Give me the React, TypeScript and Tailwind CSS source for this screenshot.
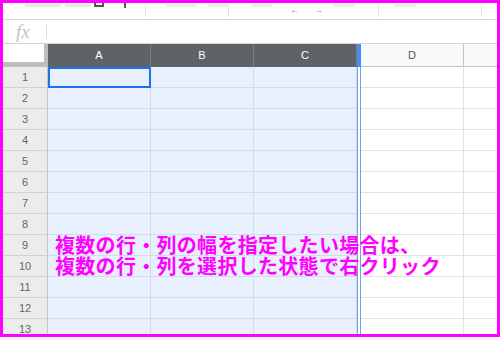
import React from 'react';

const ROWS = Array.from({ length: 13 }, (_, i) => i + 1);
const COLS = 'grid grid-cols-[45px_103px_103px_103px_4px_103px_33px]';

// faint toolbar leftovers, only the lower edge of the icons is visible
const Toolbar: React.FC = () => (
  <div className="flex h-[17px] items-start border-b border-[#d9d9d9] bg-white pl-[22px]">
    <div className="mt-px h-[3px] w-[36px] bg-[#e8e8e8]" />
    <div className="ml-[4px] mt-px h-[3px] w-[26px] bg-[#e8e8e8]" />
    <div className="ml-[3px] h-[4px] w-[10px] border-x-2 border-b-2 border-[#555]" />
    <div className="ml-[20px] h-[5px] w-[2px] bg-[#555]" />
    <div className="ml-[19px] mt-[2px] h-[12px] w-px bg-[#e4e4e4]" />
    <div className="ml-[20px] mt-px h-[3px] w-[30px] bg-[#ececec]" />
    <div className="ml-[12px] mt-px h-[3px] w-[20px] bg-[#ececec]" />
    <div className="mt-[2px] h-[12px] w-px bg-[#e4e4e4]" />
    <div className="ml-[23px] mt-px h-[3px] w-[20px] bg-[#ececec]" />
    <span className="ml-[18px] text-[10px] leading-[13px] text-[#777]">←</span>
    <span className="ml-[13px] text-[10px] leading-[13px] text-[#777]">→</span>
    <div className="ml-[10px] mt-px h-[3px] w-[22px] bg-[#ececec]" />
    <div className="ml-[23px] mt-[2px] h-[12px] w-px bg-[#e4e4e4]" />
    <div className="ml-[15px] mt-px h-[3px] w-[22px] bg-[#ececec]" />
    <div className="ml-[65px] mt-[2px] h-[12px] w-px bg-[#e4e4e4]" />
  </div>
);

const FormulaBar: React.FC = () => (
  <div className="flex h-[24px] items-center border-b border-[#d4d4d4] bg-white">
    <span className="ml-[13px] w-[30px] font-['Liberation_Serif',serif] text-[19px] italic leading-none text-[#c4c4c4]">
      fx
    </span>
    <div className="h-[15px] w-px bg-[#dcdcdc]" />
  </div>
);

const HeaderRow: React.FC = () => (
  <div className={`${COLS} h-[23px] text-[11px]`}>
    <div className="flex">
      <div className="flex-1 border-b-[5px] border-[#bdbdbd] bg-white" />
      <div className="w-[4px] bg-[#bdbdbd]" />
    </div>
    {['A', 'B', 'C'].map((c) => (
      <div key={c} className="flex items-center justify-center border-r border-[#7a7e82] bg-[#5f6368] text-white">
        {c}
      </div>
    ))}
    <div className="bg-[#4a8af4]" />
    <div className="flex items-center justify-center border-r border-b border-[#c4c4c4] bg-[#f8f9fa] text-[#555]">D</div>
    <div className="border-b border-[#c4c4c4] bg-[#f8f9fa]" />
  </div>
);

const Row: React.FC<{ n: number }> = ({ n }) => (
  <div className={`${COLS} h-[21px] text-[11px]`}>
    <div className="flex items-center justify-center border-r border-b border-r-[#c4c4c4] border-b-[#d2d2d2] bg-[#ececec] text-[#666]">
      {n}
    </div>
    {[0, 1, 2].map((c) => (
      <div
        key={c}
        className={
          n === 1 && c === 0
            ? 'border-2 border-[#1a73e8] bg-[#e8f0fe]'
            : 'border-r border-b border-[#d3dbe6] bg-[#e8f0fe]'
        }
      />
    ))}
    <div className="border-x border-x-[#6fa3de] bg-white" />
    <div className="border-r border-b border-[#e2e2e2] bg-white" />
    <div className="border-b border-[#e2e2e2] bg-white" />
  </div>
);

export default function App() {
  return (
    <div className="h-[337px] w-[500px] overflow-hidden border-[3px] border-[#ff00ff] bg-white font-['Liberation_Sans',Arial,sans-serif]">
      <Toolbar />
      <FormulaBar />
      <HeaderRow />
      <div className="relative">
        {ROWS.map((n) => (
          <Row key={n} n={n} />
        ))}
        <div className="absolute left-[52px] top-[167px] font-['Noto_Sans_CJK_JP',sans-serif] text-[20px] font-bold leading-[21px] tracking-[0.3px] text-[#ff00ff]">
          <p>複数の行・列の幅を指定したい場合は、</p>
          <p>複数の行・列を選択した状態で右クリック</p>
        </div>
      </div>
    </div>
  );
}
